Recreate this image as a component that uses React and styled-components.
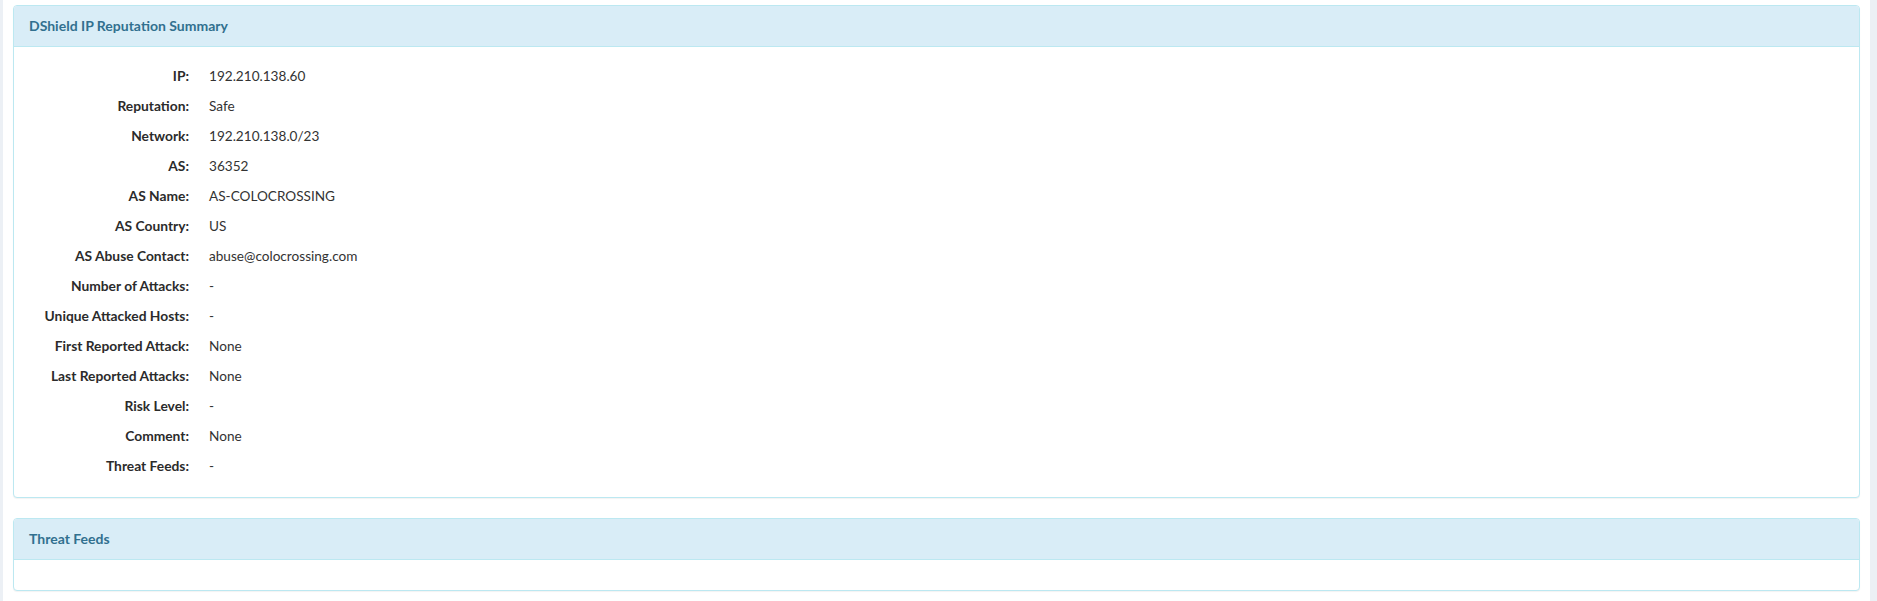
import React from 'react';
import styled, { createGlobalStyle } from 'styled-components';

const GlobalStyle = createGlobalStyle`
  * {
    margin: 0;
    padding: 0;
    box-sizing: border-box;
  }

  body, html {
    width: 100%;
    height: 100%;
    overflow: hidden;
    background-color: #ecf0f5;
  }

  #root {
    height: 100%;
    width: 100%;
  }
`;

const theme = {
  page: "#ecf0f5",
  text: "#333333",
  infoText: "#31708f",
  infoBg: "#d9edf7",
  infoBorder: "#bce8f1"
};

const Page = styled.div`
  height: 100vh;
  width: 100vw;
  display: flex;
  padding: 0 7px 0 3px;
  background: ${theme.page};
  font-family: Lato, 'Liberation Sans', sans-serif;
  font-size: 14px;
  color: ${theme.text};
`;

const Content = styled.div`
  flex: 1;
  background: #fff;
  padding: 5px 10px 0 10px;
  display: flex;
  flex-direction: column;
  gap: 20px;
`;

const Panel = styled.section`
  background: #fff;
  border: 1px solid ${theme.infoBorder};
  border-radius: 4px;
  box-shadow: 0 1px 1px rgba(0, 0, 0, 0.05);
`;

const PanelHeading = styled.div`
  background: ${theme.infoBg};
  border-bottom: 1px solid ${theme.infoBorder};
  border-radius: 3px 3px 0 0;
  padding: 10px 15px;
  line-height: 20px;
  color: ${theme.infoText};
  font-size: 14px;
  font-weight: 700;
`;

/* text sits ~1px lower in Lato than in the original font, so nudge it up */
const PanelBody = styled.div`
  padding: 14px 15px 16px;
  min-height: 30px;
`;

const DetailList = styled.dl`
  display: grid;
  grid-template-columns: 160px 1fr;
  column-gap: 20px;
  line-height: 30px;
  font-size: 13.6px;
`;

const Term = styled.dt`
  text-align: right;
  font-weight: 700;
  font-size: 13.8px;
  color: #2b2b2b;
  white-space: nowrap;
`;

const Value = styled.dd`
  white-space: nowrap;
`;

const rows = [
  ['IP', '192.210.138.60'],
  ['Reputation', 'Safe'],
  ['Network', '192.210.138.0/23'],
  ['AS', '36352'],
  ['AS Name', 'AS-COLOCROSSING'],
  ['AS Country', 'US'],
  ['AS Abuse Contact', 'abuse@colocrossing.com'],
  ['Number of Attacks', '-'],
  ['Unique Attacked Hosts', '-'],
  ['First Reported Attack', 'None'],
  ['Last Reported Attacks', 'None'],
  ['Risk Level', '-'],
  ['Comment', 'None'],
  ['Threat Feeds', '-']
];

function App() {
  return (
    <>
      <GlobalStyle />
      <Page>
        <Content>
          <Panel>
            <PanelHeading>DShield IP Reputation Summary</PanelHeading>
            <PanelBody>
              <DetailList>
                {rows.map(([label, value]) => (
                  <React.Fragment key={label}>
                    <Term>{label}:</Term>
                    <Value>{value}</Value>
                  </React.Fragment>
                ))}
              </DetailList>
            </PanelBody>
          </Panel>

          <Panel>
            <PanelHeading>Threat Feeds</PanelHeading>
            <PanelBody />
          </Panel>
        </Content>
      </Page>
    </>
  );
}

export default App;
